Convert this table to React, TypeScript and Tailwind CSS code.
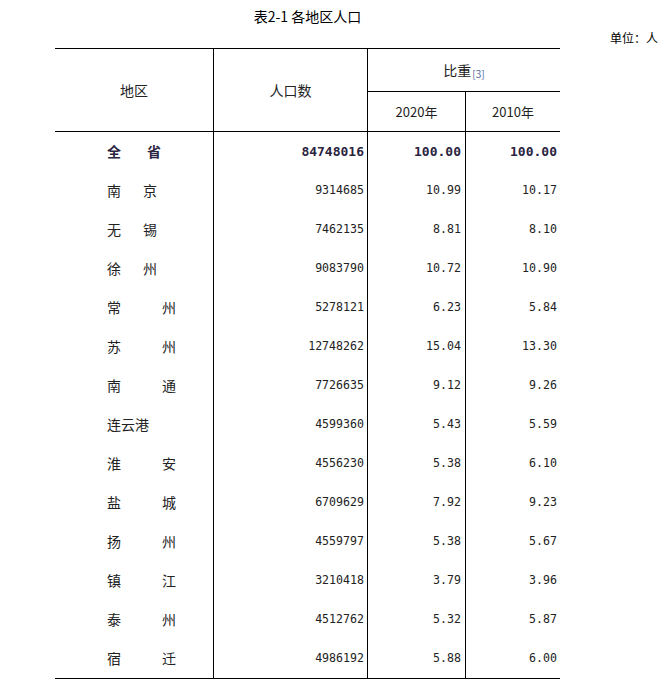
// population table page
import React from "react";

type Row = { a: string; b?: string; gap?: string; pop: string; p20: string; p10: string; bold?: boolean };

const rows: Row[] = [
  { a: "全", b: "省", gap: "ml-[26px]", pop: "84748016", p20: "100.00", p10: "100.00", bold: true },
  { a: "南", b: "京", gap: "ml-[22px]", pop: "9314685", p20: "10.99", p10: "10.17" },
  { a: "无", b: "锡", gap: "ml-[22px]", pop: "7462135", p20: "8.81", p10: "8.10" },
  { a: "徐", b: "州", gap: "ml-[22px]", pop: "9083790", p20: "10.72", p10: "10.90" },
  { a: "常", b: "州", gap: "ml-[41px]", pop: "5278121", p20: "6.23", p10: "5.84" },
  { a: "苏", b: "州", gap: "ml-[41px]", pop: "12748262", p20: "15.04", p10: "13.30" },
  { a: "南", b: "通", gap: "ml-[41px]", pop: "7726635", p20: "9.12", p10: "9.26" },
  { a: "连云港", pop: "4599360", p20: "5.43", p10: "5.59" },
  { a: "淮", b: "安", gap: "ml-[41px]", pop: "4556230", p20: "5.38", p10: "6.10" },
  { a: "盐", b: "城", gap: "ml-[41px]", pop: "6709629", p20: "7.92", p10: "9.23" },
  { a: "扬", b: "州", gap: "ml-[41px]", pop: "4559797", p20: "5.38", p10: "5.67" },
  { a: "镇", b: "江", gap: "ml-[41px]", pop: "3210418", p20: "3.79", p10: "3.96" },
  { a: "泰", b: "州", gap: "ml-[41px]", pop: "4512762", p20: "5.32", p10: "5.87" },
  { a: "宿", b: "迁", gap: "ml-[41px]", pop: "4986192", p20: "5.88", p10: "6.00" },
];

const cjk = "font-['Noto_Sans_CJK_SC',sans-serif]";

export default function App() {
  return (
    <div className={`w-[659px] h-[691px] overflow-hidden bg-white text-[#222] ${cjk}`}>
      <div className="w-[505px] ml-[55px] h-[29px] pt-[7px] text-center text-[14px] leading-[18px] text-black">
        表2-1 各地区人口
      </div>
      <div className="h-[19px] pl-[610px] whitespace-nowrap text-[12px] leading-[18px] text-black">
        单位：人
      </div>

      <div className="w-[505px] ml-[55px] border-t border-b border-black">
        {/* header */}
        <div className="flex h-[83px] border-b border-black text-[14px]">
          <div className="w-[158px] flex items-center justify-center">地区</div>
          <div className="w-[154px] border-l border-black flex items-center justify-center">人口数</div>
          <div className="flex-1 border-l border-black flex flex-col">
            <div className="h-[43px] border-b border-black flex items-center justify-center">
              <span>比重</span>
              <span className="text-[10px] text-[#4a6aa5] mt-[6px] ml-[1px]">[3]</span>
            </div>
            <div className="flex-1 flex text-[13px]">
              <div className="w-[97px] flex items-center justify-center">2020年</div>
              <div className="flex-1 border-l border-black flex items-center justify-center">2010年</div>
            </div>
          </div>
        </div>

        {/* body */}
        {rows.map((r, i) => {
          const num = r.bold
            ? "font-['DejaVu_Sans_Mono',monospace] text-[13px] font-bold text-[#2a2440]"
            : "font-['DejaVu_Sans_Mono',monospace] text-[11.6px]";
          return (
            <div key={i} className="flex h-[39px] items-center">
              <div className={`w-[158px] pl-[52px] flex text-[14px] ${r.bold ? "font-bold text-[#2a2440]" : ""}`}>
                <span>{r.a}</span>
                {r.b && <span className={r.gap}>{r.b}</span>}
              </div>
              <div className={`w-[154px] h-full border-l border-black flex items-center justify-end pr-[3px] ${num}`}>{r.pop}</div>
              <div className={`w-[98px] h-full border-l border-black flex items-center justify-end pr-[4px] ${num}`}>{r.p20}</div>
              <div className={`flex-1 h-full border-l border-black flex items-center justify-end pr-[3px] ${num}`}>{r.p10}</div>
            </div>
          );
        })}
      </div>
    </div>
  );
}
